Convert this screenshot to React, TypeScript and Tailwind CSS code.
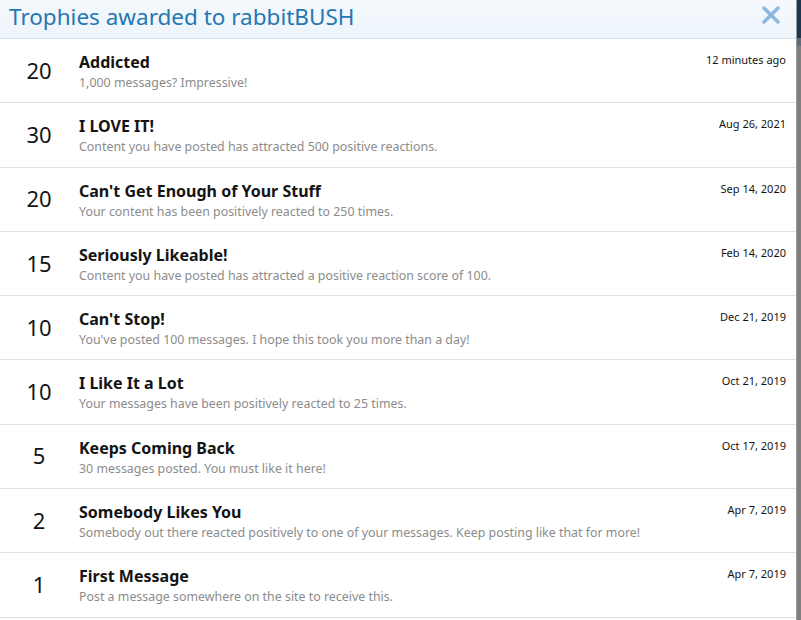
import { X } from 'lucide-react';

interface Trophy {
    points: number;
    title: string;
    description: string;
    date: string;
}

const trophies: Trophy[] = [
    { points: 20, title: 'Addicted', description: '1,000 messages? Impressive!', date: '12 minutes ago' },
    { points: 30, title: 'I LOVE IT!', description: 'Content you have posted has attracted 500 positive reactions.', date: 'Aug 26, 2021' },
    { points: 20, title: "Can't Get Enough of Your Stuff", description: 'Your content has been positively reacted to 250 times.', date: 'Sep 14, 2020' },
    { points: 15, title: 'Seriously Likeable!', description: 'Content you have posted has attracted a positive reaction score of 100.', date: 'Feb 14, 2020' },
    { points: 10, title: "Can't Stop!", description: "You've posted 100 messages. I hope this took you more than a day!", date: 'Dec 21, 2019' },
    { points: 10, title: 'I Like It a Lot', description: 'Your messages have been positively reacted to 25 times.', date: 'Oct 21, 2019' },
    { points: 5, title: 'Keeps Coming Back', description: '30 messages posted. You must like it here!', date: 'Oct 17, 2019' },
    { points: 2, title: 'Somebody Likes You', description: 'Somebody out there reacted positively to one of your messages. Keep posting like that for more!', date: 'Apr 7, 2019' },
    { points: 1, title: 'First Message', description: 'Post a message somewhere on the site to receive this.', date: 'Apr 7, 2019' },
];

export default function App() {
    return (
        <div className="flex w-[801px] h-[620px] overflow-hidden bg-white" style={{ fontFamily: '"Noto Sans", sans-serif' }}>
            {/* Overlay panel */}
            <div className="w-[797px] shrink-0 border-r border-[#9a9a9a] flex flex-col">
                <div className="h-[39px] shrink-0 flex items-center justify-between pl-[9px] pr-[11px] bg-gradient-to-b from-[#f5f9fd] to-[#edf4fb] border-b border-[#dbe1e8]">
                    <h2 className="text-[22.5px] leading-none text-[#2577b1] -mt-[4px]">Trophies awarded to rabbitBUSH</h2>
                    <X className="w-[28px] h-[28px] text-[#8bb8de] -mt-[8px]" strokeWidth={3} />
                </div>
                <ul>
                    {trophies.map((t) => (
                        <li key={t.title} className="h-[64.3px] flex border-b border-[#e2e2e2]">
                            <div className="w-[79px] shrink-0 flex items-center justify-center text-[22px] text-[#141414] pb-[1px] pr-[1px]">
                                {t.points}
                            </div>
                            <div className="flex-1 min-w-0 pt-[12px]">
                                <div className="text-[16px] font-bold leading-[22px] text-[#141414]">{t.title}</div>
                                <div className="mt-[2px] text-[12.4px] leading-[16px] text-[#8c8c8c]">{t.description}</div>
                            </div>
                            <div className="shrink-0 pt-[14px] pr-[10px] text-[11px] leading-[14px] text-[#141414]">{t.date}</div>
                        </li>
                    ))}
                </ul>
            </div>
            {/* Page behind overlay */}
            <div className="flex-1 flex flex-col bg-[#7f7f7f]">
                <div className="h-[38px] bg-[#1d3650]" />
                <div className="h-[8px] bg-[#5c6d7e]" />
            </div>
        </div>
    );
}
